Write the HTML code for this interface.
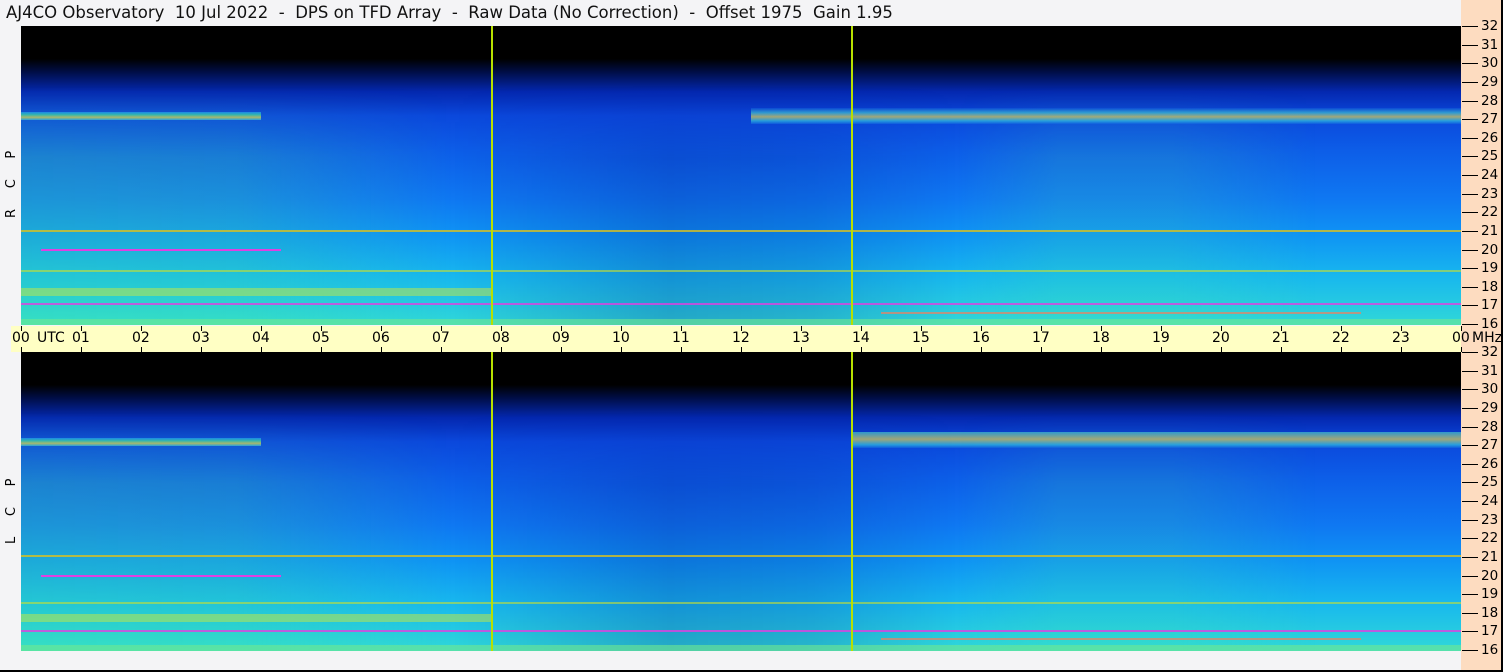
<!DOCTYPE html>
<html><head><meta charset="utf-8"><style>
body{margin:0;width:1503px;height:672px;background:#f4f4f6;position:relative;overflow:hidden;font-family:"DejaVu Sans","Liberation Sans",sans-serif}
.title{position:absolute;left:6px;top:3px;font-size:16.5px;color:#111;white-space:pre}
.rs{position:absolute;left:1461px;top:0;width:40px;height:670px;background:#fddcc0}
.bb{position:absolute;left:0;top:670px;width:1503px;height:2px;background:#000}
.rb{position:absolute;left:1501px;top:0;width:2px;height:672px;background:#000}
.band{position:absolute;left:11px;top:326px;width:1450px;height:26px;background:#ffffc4}
.p{position:absolute;left:21px;width:1440px;height:299px;overflow:hidden;
background:linear-gradient(180deg,#000 0,#000 11%,#000c40 15%,#0428b0 22%,#0b48dc 30%,#0d5ee8 42%,#0f78f2 58%,#0f94f4 70%,#18b8ee 84%,#30d8d8 100%)}
.ov{position:absolute;left:0;top:60px;width:1440px;height:239px;
background:linear-gradient(90deg,rgba(80,255,120,.22) 0,rgba(80,255,120,.18) 15%,rgba(0,0,0,0) 30%,rgba(0,0,120,.2) 45%,rgba(0,0,120,.15) 55%,rgba(0,0,0,0) 65%,rgba(80,255,140,.13) 72%,rgba(80,255,140,.13) 80%,rgba(0,0,0,0) 90%);
-webkit-mask-image:linear-gradient(180deg,transparent,#000 30%);mask-image:linear-gradient(180deg,transparent,#000 30%)}
.l{position:absolute;height:2px}
.v{position:absolute;top:0;width:2px;height:299px;background:#b8e000}
.lab{position:absolute;left:4px;font-size:13px;color:#000;transform:rotate(-90deg);transform-origin:left top}
.t{position:absolute;font-size:14px;color:#000}
.tk{position:absolute;width:16px;height:1px;background:#000;left:1462px}
.tn{position:absolute;left:1481px;font-size:13.5px;color:#000}
.ht{position:absolute;width:1px;height:5px;background:#000}
</style></head><body>
<div class="title">AJ4CO Observatory  10 Jul 2022  -  DPS on TFD Array  -  Raw Data (No Correction)  -  Offset 1975  Gain 1.95</div>
<div class="rs"></div>
<div class="band"></div>

<div class="p" style="top:26px">
<div class="ov"></div>
<div class="l" style="top:86px;left:0;width:240px;height:8px;background:linear-gradient(180deg,#20a0f0,#40e0a0,#e8e040,#30c0e0);opacity:.7"></div>
<div class="l" style="top:82px;left:730px;width:710px;height:16px;background:linear-gradient(180deg,#0c50d8,#40c0d0 30%,#e0d050 55%,#30c0e0 80%,#1060e0);opacity:.7"></div>
<div class="l" style="top:204px;left:0;width:1440px;background:#d8c020;opacity:.8"></div>
<div class="l" style="top:223px;left:20px;width:240px;background:#e040e0"></div>
<div class="l" style="top:244px;left:0;width:1440px;background:#c8e030;opacity:.6"></div>
<div class="l" style="top:262px;left:0;width:470px;height:8px;background:#c8e840;opacity:.5"></div>
<div class="l" style="top:277px;left:0;width:1440px;background:#e040e0;opacity:.8"></div>
<div class="l" style="top:286px;left:860px;width:480px;background:#f08060;opacity:.7"></div>
<div class="l" style="top:293px;left:0;width:1440px;height:6px;background:#70e890;opacity:.6"></div>
<div class="v" style="left:470px"></div><div class="v" style="left:830px"></div>
</div>

<div class="p" style="top:352px">
<div class="ov"></div>
<div class="l" style="top:86px;left:0;width:240px;height:8px;background:linear-gradient(180deg,#20a0f0,#40e0a0,#e8e040,#30c0e0);opacity:.7"></div>
<div class="l" style="top:80px;left:830px;width:610px;height:16px;background:linear-gradient(180deg,#40c0d0,#e0d050 45%,#30c0e0 80%,#1060e0);opacity:.7"></div>
<div class="l" style="top:203px;left:0;width:1440px;background:#d8c020;opacity:.8"></div>
<div class="l" style="top:223px;left:20px;width:240px;background:#e040e0"></div>
<div class="l" style="top:250px;left:0;width:1440px;background:#c8e030;opacity:.6"></div>
<div class="l" style="top:262px;left:0;width:470px;height:8px;background:#c8e840;opacity:.5"></div>
<div class="l" style="top:278px;left:0;width:1440px;background:#e040e0;opacity:.8"></div>
<div class="l" style="top:286px;left:860px;width:480px;background:#f08060;opacity:.7"></div>
<div class="l" style="top:293px;left:0;width:1440px;height:6px;background:#70e890;opacity:.6"></div>
<div class="v" style="left:470px"></div><div class="v" style="left:830px"></div>
</div>

<div class="lab" style="top:218px">R&nbsp;&nbsp;&nbsp;&nbsp;&nbsp;C&nbsp;&nbsp;&nbsp;&nbsp;&nbsp;P</div>
<div class="lab" style="top:544px">L&nbsp;&nbsp;&nbsp;&nbsp;&nbsp;C&nbsp;&nbsp;&nbsp;&nbsp;&nbsp;P</div>

<div id="axis"></div>
<script>
var h='';
var lbl=['00','01','02','03','04','05','06','07','08','09','10','11','12','13','14','15','16','17','18','19','20','21','22','23','00'];
for(var i=0;i<25;i++){var x=21+i*60;
h+='<div class="ht" style="left:'+x+'px;top:326px"></div><div class="ht" style="left:'+x+'px;top:347px"></div>';
h+='<div class="t" style="left:'+(x-9)+'px;top:330px">'+lbl[i]+'</div>';}
h+='<div class="t" style="left:37px;top:330px">UTC</div><div class="t" style="left:1472px;top:330px">MHz</div>';
for(var p=0;p<2;p++){var y0=p?352:26;
for(var m=32;m>=16;m--){var y=Math.round(y0+(32-m)*298/16);
h+='<div class="tk" style="top:'+y+'px"></div><div class="tn" style="top:'+(y-8)+'px">'+m+'</div>';}}
document.getElementById('axis').innerHTML=h;
</script>
<div class="bb"></div><div class="rb"></div>
</body></html>
